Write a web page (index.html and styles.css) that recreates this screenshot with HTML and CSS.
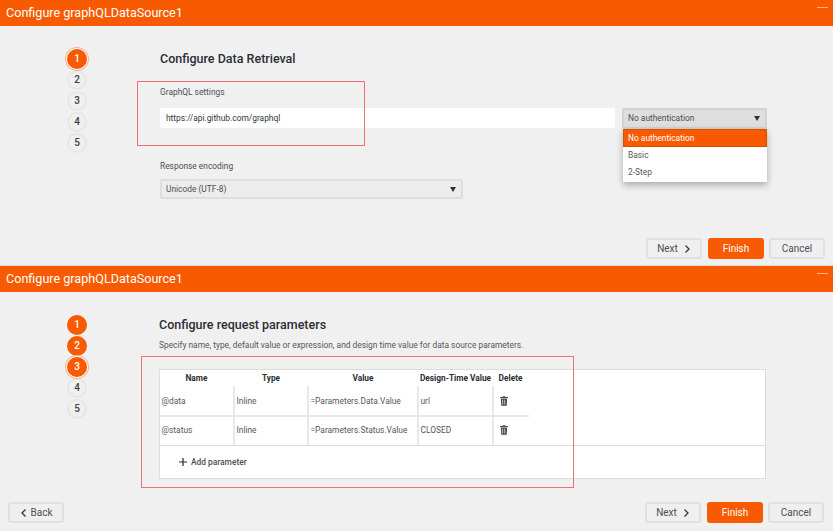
FILE: index.html
```html
<!DOCTYPE html>
<html lang="en">
<head>
    <meta charset="UTF-8">
    <meta name="viewport" content="width=device-width, initial-scale=1.0">
    <title>Configure graphQLDataSource1</title>
    <link rel="stylesheet" href="styles.css">
</head>
<body>
    <section class="panel panel-first">
        <header class="panel-header">
            <h1>Configure graphQLDataSource1</h1>
            <span class="minimize"></span>
        </header>
        <div class="panel-body">
            <ol class="steps">
                <li class="step current">1</li>
                <li class="step">2</li>
                <li class="step">3</li>
                <li class="step">4</li>
                <li class="step">5</li>
            </ol>
            <div class="content">
                <h2>Configure Data Retrieval</h2>
                <div class="field-label settings-label">GraphQL settings</div>
                <div class="url-row">
                    <div class="text-input">https://api.github.com/graphql</div>
                    <div class="select auth-select">
                        <span>No authentication</span>
                        <i class="caret"></i>
                    </div>
                </div>
                <div class="field-label encoding-label">Response encoding</div>
                <div class="select encoding-select">
                    <span>Unicode (UTF-8)</span>
                    <i class="caret"></i>
                </div>
            </div>
        </div>
        <footer class="panel-footer">
            <button class="btn next-btn">Next
                <svg class="chevron" viewBox="0 0 8 10"><path d="M2.5 1.5 6 5 2.5 8.5"/></svg>
            </button>
            <button class="btn primary">Finish</button>
            <button class="btn">Cancel</button>
        </footer>
        <ul class="dropdown">
            <li class="selected">No authentication</li>
            <li>Basic</li>
            <li>2-Step</li>
        </ul>
        <div class="callout callout-settings"></div>
    </section>

    <section class="panel panel-second">
        <header class="panel-header">
            <h1>Configure graphQLDataSource1</h1>
            <span class="minimize"></span>
        </header>
        <div class="panel-body">
            <ol class="steps">
                <li class="step done">1</li>
                <li class="step done">2</li>
                <li class="step done current">3</li>
                <li class="step">4</li>
                <li class="step">5</li>
            </ol>
            <div class="content params-content">
                <h2>Configure request parameters</h2>
                <p class="hint">Specify name, type, default value or expression, and design time value for data source parameters.</p>
                <div class="params-box">
                    <div class="params-grid">
                        <div class="head">Name</div>
                        <div class="head">Type</div>
                        <div class="head">Value</div>
                        <div class="head">Design-Time Value</div>
                        <div class="head">Delete</div>

                        <div class="cell">@data</div>
                        <div class="cell">Inline</div>
                        <div class="cell">=Parameters.Data.Value</div>
                        <div class="cell">url</div>
                        <div class="cell delete-cell">
                            <svg class="trash" viewBox="0 0 10 12"><path d="M3.6 0h2.8l.5 1H10v1.3H0V1h3.1z"/><path d="M1 3h8l-.6 9H1.600zM3 4.500v6h.8v-6zm2.600 0v6h.8v-6z" fill-rule="evenodd"/></svg>
                        </div>

                        <div class="cell last">@status</div>
                        <div class="cell last">Inline</div>
                        <div class="cell last">=Parameters.Status.Value</div>
                        <div class="cell last">CLOSED</div>
                        <div class="cell last delete-cell">
                            <svg class="trash" viewBox="0 0 10 12"><path d="M3.6 0h2.8l.5 1H10v1.3H0V1h3.1z"/><path d="M1 3h8l-.6 9H1.600zM3 4.500v6h.8v-6zm2.600 0v6h.8v-6z" fill-rule="evenodd"/></svg>
                        </div>
                    </div>
                    <div class="add-row">
                        <svg class="plus" viewBox="0 0 9 9"><path d="M4.500 0v9M0 4.500h9"/></svg>
                        <span>Add parameter</span>
                    </div>
                </div>
            </div>
        </div>
        <footer class="panel-footer">
            <button class="btn back-btn">
                <svg class="chevron" viewBox="0 0 8 10"><path d="M5.500 1.500 2 5l3.500 3.500"/></svg>
                Back
            </button>
            <button class="btn next-btn">Next
                <svg class="chevron" viewBox="0 0 8 10"><path d="M2.500 1.500 6 5 2.500 8.500"/></svg>
            </button>
            <button class="btn primary">Finish</button>
            <button class="btn">Cancel</button>
        </footer>
        <div class="callout callout-params"></div>
    </section>
</body>
</html>
```

FILE: styles.css
```css
* {
    box-sizing: border-box;
}

html, body {
    margin: 0;
    height: 531px;
    overflow: hidden;
}

body {
    font-family: Roboto, "Liberation Sans", sans-serif;
    font-size: 8.400px;
    color: #3c3f45;
    background-color: #f0f0f0;
}

.panel {
    position: relative;
    display: flex;
    flex-direction: column;
    background-color: #f0f0f0;
}

.panel-first {
    height: 266px;
    border-bottom: 1px solid #dcdcdc;
}

.panel-second {
    height: 265px;
}

.panel-header {
    display: flex;
    justify-content: space-between;
    height: 26px;
    flex: none;
    padding-left: 6px;
    background-color: #f75a00;
    color: #fff;
}

.panel-header h1 {
    margin: 0;
    font-size: 12.600px;
    font-weight: 400;
    line-height: 25px;
}

.minimize {
    width: 11px;
    height: 1px;
    margin: 7px 5px 0 0;
    background-color: #fbb48c;
}

.panel-body {
    display: flex;
    flex: 1;
    padding: 23px 0 0 67px;
}

.steps {
    display: flex;
    flex-direction: column;
    gap: 1px;
    width: 20px;
    margin: 0;
    padding: 0;
    list-style: none;
}

.step {
    width: 20px;
    height: 20px;
    border: 2px solid #e6e6e6;
    border-radius: 50%;
    font-size: 10px;
    font-weight: 500;
    line-height: 16px;
    text-align: center;
}

.step.done {
    border-color: #f75a00;
    background-color: #f75a00;
    color: #fff;
}

.step.current {
    position: relative;
    border-color: #f75a00;
    background-color: #f75a00;
    color: #fff;
    box-shadow: 0 0 0 1px #f3f3f3, 0 0 0 2px #f8b48f;
}

.content {
    width: 606px;
    margin-left: 73px;
}

.params-content {
    width: 607px;
    margin-left: 72px;
}

h2 {
    margin: 0;
    font-size: 12.500px;
    font-weight: 500;
    line-height: 20px;
    color: #2b2e33;
}

.field-label {
    line-height: 14px;
    color: #4c4f55;
}

.settings-label {
    margin-top: 16px;
}

.encoding-label {
    margin-top: 30px;
}

.url-row {
    display: flex;
    gap: 7px;
    margin-top: 9px;
    width: 607px;
}

.text-input {
    flex: 1;
    height: 20px;
    padding-left: 6px;
    border-radius: 2px;
    background-color: #fff;
    line-height: 20px;
    color: #33363b;
}

.select {
    display: flex;
    align-items: center;
    justify-content: space-between;
    height: 20px;
    padding: 0 5px 0 4px;
    border: 2px solid #dedede;
    border-radius: 2px;
    background-color: #ececec;
    color: #4c4f55;
}

.auth-select {
    width: 145px;
    height: 21px;
    padding-bottom: 1px;
    border-color: #d2d2d2;
    background-color: #dedede;
}

.encoding-select {
    width: 303px;
    margin-top: 6px;
}

.caret {
    width: 0;
    height: 0;
    border-left: 3.5px solid transparent;
    border-right: 3.5px solid transparent;
    border-top: 5px solid #2f3136;
}

.dropdown {
    position: absolute;
    top: 129px;
    left: 623px;
    width: 144px;
    margin: 0;
    padding: 0;
    list-style: none;
    background-color: #fff;
    box-shadow: 0 3px 7px rgba(0, 0, 0, 0.3);
}

.dropdown li {
    height: 17.500px;
    padding-left: 5px;
    line-height: 17.500px;
    color: #55585e;
}

.dropdown li.selected {
    border: 1px solid #d94f00;
    padding-left: 4px;
    background-color: #f75a00;
    color: #fff;
    line-height: 16.500px;
}

.panel-footer {
    display: flex;
    justify-content: flex-end;
    gap: 5px;
    padding: 0 8px 6px 8px;
}

.panel-second .panel-footer {
    padding-right: 9px;
    padding-bottom: 8px;
}

.btn {
    display: flex;
    align-items: center;
    justify-content: center;
    width: 56px;
    height: 21px;
    padding: 0;
    border: 2px solid #e0e0e0;
    border-radius: 3px;
    background-color: #efefef;
    font-family: inherit;
    font-size: 10px;
    color: #4c4f55;
}

.btn.primary {
    border-color: #f75a00;
    background-color: #f75a00;
    color: #fff;
}

.next-btn {
    gap: 5px;
    margin-right: 1px;
}

.back-btn {
    gap: 3px;
    margin-right: auto;
}

.chevron {
    width: 8px;
    height: 10px;
    fill: none;
    stroke: #33363b;
    stroke-width: 1.300;
}

.hint {
    margin: 4px 0 0;
    line-height: 13px;
    color: #55585e;
}

.params-box {
    margin-top: 17px;
    height: 110px;
    border: 1px solid #dcdcdc;
    background-color: #fff;
}

.params-grid {
    display: grid;
    grid-template-columns: 75px 74px 110px 75px 35px;
    grid-template-rows: 16px 31px 28px;
    width: 369px;
}

.head {
    padding-right: 2px;
    font-weight: 700;
    font-size: 8.300px;
    line-height: 16px;
    text-align: center;
    color: #2b2e33;
    white-space: nowrap;
}

.cell {
    display: flex;
    align-items: center;
    padding-left: 1.500px;
    border-right: 2px solid #e8e8e8;
    border-bottom: 2px solid #e8e8e8;
    color: #55585e;
    white-space: nowrap;
}

.cell.last {
    padding-bottom: 3px;
    border-bottom: 0;
}

.delete-cell {
    padding-left: 6px;
    border-right: 0;
}

.trash {
    width: 8px;
    height: 10px;
    fill: #4a4c50;
}

.add-row {
    display: flex;
    align-items: center;
    gap: 4px;
    height: 33px;
    padding-left: 19px;
    border-top: 1px solid #dcdcdc;
    font-weight: 500;
    color: #4c4f55;
}

.plus {
    width: 8px;
    height: 8px;
    stroke: #2b2e33;
    stroke-width: 1.400;
}

.callout {
    position: absolute;
    border: 1px solid #ee6f78;
    pointer-events: none;
}

.callout-settings {
    top: 81px;
    left: 137px;
    width: 228px;
    height: 65px;
}

.callout-params {
    top: 90px;
    left: 141px;
    width: 433px;
    height: 132px;
}
```
